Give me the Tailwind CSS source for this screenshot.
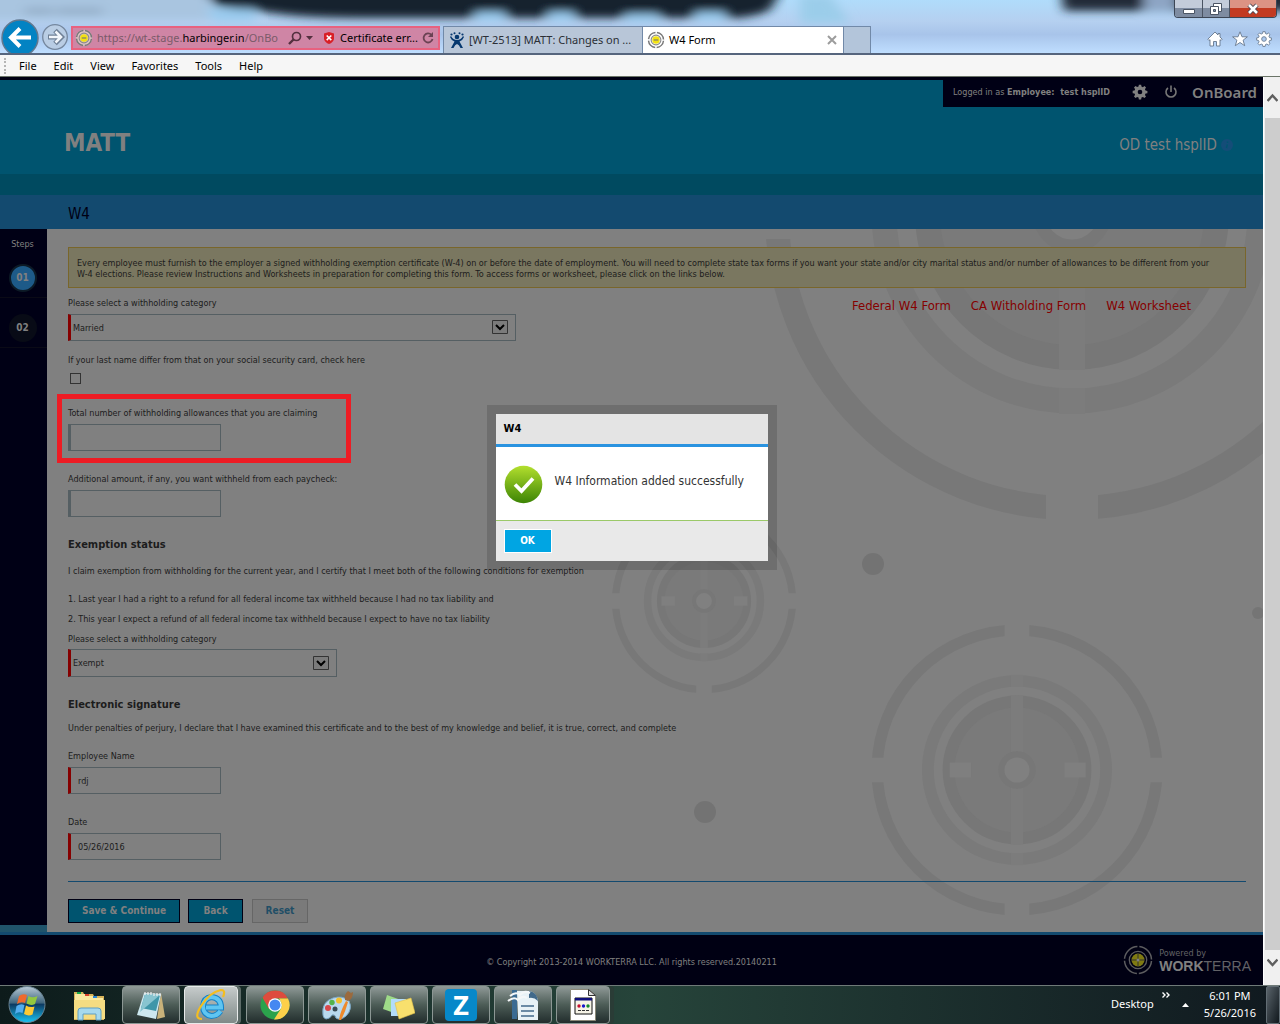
<!DOCTYPE html>
<html lang="en">
<head>
    <meta charset="UTF-8">
    <meta name="viewport" content="width=device-width, initial-scale=1.0">
    <title>W4 Form</title>
    <script src="https://cdn.jsdelivr.net/npm/@tailwindcss/browser@4"></script>
</head>
<body class="h-screen flex flex-col overflow-hidden bg-[#000013] font-['DejaVu_Sans_Condensed','DejaVu_Sans',sans-serif] text-[9px] leading-4 text-[#1c1c1c]">

    <!-- shared shapes -->
    <svg class="hidden">
        <defs>
            <g id="target">
                <circle r="295" fill="none" stroke="#787878" stroke-width="24"/>
                <circle r="188" fill="none" stroke="#7a7a7a" stroke-width="25"/>
                <circle r="157" fill="#777777"/>
                <circle r="132" fill="#7a7a7a"/>
                <path d="M-13-201h26v26h-26zM-13 175h26v26h-26zM-13-157h26v314h-26z" fill="#7c7c7c"/>
                <path d="M-26-310h52v30h-52zM-26 280h52v30h-52zM-310-26h30v52h-30zM280-26h30v52h-30z" fill="#808080"/>
                <path d="M-142-16h45v32h-45zM100-16h45v32h-45z" fill="#7f7f7f"/>
                <circle r="33" fill="#808080" stroke="#777777" stroke-width="13"/>
            </g>
            <g id="wheel">
                <circle cx="12" cy="12" r="10" fill="none" stroke="#777" stroke-width="2" stroke-dasharray="13.7 2" stroke-dashoffset="-1"/>
                <circle cx="12" cy="12" r="6.5" fill="none" stroke="#8a8a8a" stroke-width="1.5"/>
                <circle cx="12" cy="12" r="5" fill="#f2e211"/>
                <path d="M9 12h6" stroke="#777" stroke-width="1.5"/>
            </g>
            <path id="gear" d="M10.3 1h3.4l.5 2.8 2.1.9 2.4-1.6 2.3 2.3-1.6 2.4.9 2.1 2.8.5v3.4l-2.8.5-.9 2.1 1.6 2.4-2.3 2.3-2.4-1.6-2.1.9-.5 2.8h-3.4l-.5-2.8-2.1-.9-2.4 1.6L3 18.700l1.600-2.400-.9-2.100L1 13.700v-3.400l2.800-.5.9-2.100L3 5.300 5.300 3l2.400 1.600 2.100-.9zM12 8.500a3.500 3.500 0 1 0 0 7 3.500 3.500 0 0 0 0-7z" fill-rule="evenodd"/>
        </defs>
    </svg>

    <!-- browser window top -->
    <header class="relative h-[55px] shrink-0 overflow-hidden border-b-2 border-b-[#56657d] bg-[#b4d2f3] font-['Noto_Sans',sans-serif] text-xs text-black">
        <svg class="absolute inset-0 size-full" viewBox="0 0 1280 53" preserveAspectRatio="none">
            <defs>
                <filter id="soft" x="-10%" y="-80%" width="120%" height="260%"><feGaussianBlur stdDeviation="6 4"/></filter>
                <linearGradient id="glass" x1="0" y1="0" x2="0" y2="1">
                    <stop offset="0" stop-color="#b0dcfb"/><stop offset=".4" stop-color="#b5d0f0"/><stop offset=".65" stop-color="#a8c4ea"/><stop offset="1" stop-color="#bfdeff"/>
                </linearGradient>
            </defs>
            <rect width="1280" height="53" fill="url(#glass)"/>
            <g filter="url(#soft)">
                <path d="M-20-10h230v30H-20z" fill="#a9c5e0"/>
                <path d="M200-14h584l-14 24q-20 10-60 8h-340q-60 0-90-4l-64-8z" fill="#18212d"/>
                <path d="M205 9h50v12h-40zM475 12h30v9h-30zM548 12h26v9h-26zM625 14h34v8h-34zM695 12h30v9h-30z" fill="#98caee"/>
                <path d="M1060-12h240v23h-236z" fill="#202a38"/>
                <path d="M1144-12h32v24h-32z" fill="#8da5c4"/>
                <path d="M800-5h30l20 28h-50z" fill="#9bcdea"/>
                <path d="M25 8h28v6H25zM57 8h45v6H57z" fill="#8298b0" opacity=".6"/>
            </g>
        </svg>

        <div class="relative flex h-full items-end">
            <button aria-label="Back" class="h-[34px] w-10 shrink-0">
                <svg class="h-[34px] w-10" viewBox="0 0 40 34"><circle cx="20" cy="19" r="18" fill="#0383c3" stroke="#62788f" stroke-width="1.500"/><path d="M31 18.500H12M20 9.500l-9 9 9 9" fill="none" stroke="#fff" stroke-width="4"/></svg>
            </button>
            <button aria-label="Forward" class="mb-px ml-0.5 h-7 w-7 shrink-0">
                <svg class="size-7" viewBox="0 0 28 28"><circle cx="13" cy="13" r="12.300" fill="#b9cde4" stroke="#75879e" stroke-width="1.300"/><path d="M6 13h13M13 6.500l6.500 6.500-6.500 6.500" fill="none" stroke="#6f8096" stroke-width="5"/><path d="M7 13h12M13.500 7.500L19 13l-5.500 5.500" fill="none" stroke="#f2f6fb" stroke-width="2.600"/></svg>
            </button>
            <div class="mb-[3px] ml-px flex h-6 w-[369px] shrink-0 items-center border-2 border-[#e8617f] bg-[#cf85a5]">
                <svg class="ml-[2px] size-[18px] shrink-0" viewBox="0 0 24 24"><circle cx="12" cy="12" r="11" fill="#ddc3c6"/><use href="#wheel"/></svg>
                <p class="ml-1 w-[187px] whitespace-nowrap text-[11px] text-[#7a5b69]">https://wt-stage.<span class="text-black">harbinger.in</span>/OnBo</p>
                <svg class="ml-1 size-3.5 shrink-0" viewBox="0 0 14 14"><circle cx="8.500" cy="5.500" r="4" fill="none" stroke="#54303f" stroke-width="1.700"/><path d="M5.500 8.500L1 13" stroke="#54303f" stroke-width="2.400"/></svg>
                <svg class="ml-1 h-1 w-[7px] shrink-0" viewBox="0 0 7 4"><path d="M0 0h7L3.500 4z" fill="#54303f"/></svg>
                <svg class="ml-[11px] h-3 w-2.5 shrink-0" viewBox="0 0 10 12"><path d="M5 0l5 1.500V7q-1 3.500-5 5-4-1.500-5-5V1.500z" fill="#d91f26"/><path d="M2.700 3.500l4.600 4.600M7.300 3.500L2.700 8.100" stroke="#fff" stroke-width="1.600"/></svg>
                <span class="ml-1.5 w-[82px] shrink-0 whitespace-nowrap text-[11px]">Certificate err...</span>
                <svg class="size-3 shrink-0" viewBox="0 0 12 12"><path d="M9.500 3A4.500 4.500 0 1 0 10.500 7" fill="none" stroke="#6b4253" stroke-width="1.800"/><path d="M11 0v5H6z" fill="#6b4253"/></svg>
            </div>
            <div class="ml-[3px] flex h-[27px] w-[200px] shrink-0 items-center border border-b-0 border-[#7189a8] bg-[#b8c6d8] text-[#2b2f36]">
                <svg class="ml-[5px] size-4 shrink-0" viewBox="0 0 16 16" fill="#06386f"><circle cx="8" cy="5" r="2.300"/><circle cx="2.500" cy="2.500" r="1.100"/><circle cx="5.500" cy="1.200" r="1"/><circle cx="10.500" cy="1.200" r="1"/><circle cx="13.500" cy="2.500" r="1.100"/><path d="M2 4q2 4 6 4t6-4l1 1q-1 3-4.500 4.500L14 16h-2.500Q10 12.500 8 12q-2 .5-3.500 4H2l3.500-6.500Q2 8 1 5z"/></svg>
                <span class="ml-1 whitespace-nowrap text-[11px]">[WT-2513] MATT: Changes on ...</span>
            </div>
            <div class="flex h-[27px] w-[200px] shrink-0 items-center border-t border-[#7189a8] bg-white">
                <svg class="ml-1 size-[18px] shrink-0" viewBox="0 0 24 24"><use href="#wheel"/></svg>
                <span class="ml-1 flex-1 text-[11px]">W4 Form</span>
                <button aria-label="Close tab" class="mr-1.5"><svg class="size-2.5" viewBox="0 0 10 10"><path d="M1 1l8 8M9 1L1 9" stroke="#9c9c9c" stroke-width="2"/></svg></button>
            </div>
            <div class="h-[27px] w-7 shrink-0 border border-b-0 border-[#7189a8] bg-[#b3c5da]"></div>
            <nav class="mr-2 mb-1.5 ml-auto flex gap-2">
                <svg class="size-4" viewBox="0 0 16 16"><path d="M8 1L.8 8.200 2 9.500l1-.8V15h3.500v-4.500h3V15H13V8.700l1 .8 1.200-1.300-2.200-2.200V2.500h-2V4z" fill="#fff" stroke="#66788f" stroke-width=".9"/></svg>
                <svg class="ml-px size-4" viewBox="0 0 16 16"><path d="M8 .8l2 5h5.400l-4.300 3.400 1.600 5.500L8 11.500l-4.700 3.200 1.600-5.500L.6 5.800H6z" fill="#fff" stroke="#66788f" stroke-width=".9"/></svg>
                <svg class="size-4" viewBox="0 0 24 24"><use href="#gear" fill="#fff" stroke="#66788f" stroke-width="1.300"/></svg>
            </nav>
        </div>
        <div class="absolute top-0 right-[3px] flex h-[18px] overflow-hidden rounded-b border border-t-0 border-[#3c4655]">
            <button aria-label="Minimize" class="flex w-7 items-center justify-center border-r border-[#4a5463] bg-linear-to-b from-[#c3ccda] from-50% to-[#7e8ca1] to-50%"><svg class="h-4 w-3" viewBox="0 0 12 16"><path d="M.5 8.500h11v4H.5z" fill="#fff" stroke="#4b5564"/></svg></button>
            <button aria-label="Restore" class="flex w-[27px] items-center justify-center border-r border-[#4a5463] bg-linear-to-b from-[#c3ccda] from-50% to-[#7e8ca1] to-50%"><svg class="size-3" viewBox="0 0 12 12"><path d="M3.500.5h8v8h-8z" fill="#fff" stroke="#4b5564"/><path d="M.5 3.500h8v8h-8z" fill="#fff" stroke="#4b5564"/><path d="M3.500 6.500h2v2h-2z" fill="#8090a5" stroke="#4b5564"/></svg></button>
            <button aria-label="Close" class="flex w-[46px] items-center justify-center bg-linear-to-b from-[#dc9384] from-45% to-[#c23a21] to-50%"><svg class="h-3 w-3" viewBox="0 0 12 12"><path d="M2 2l8 8M10 2l-8 8" stroke="#4b4450" stroke-width="4.500"/><path d="M2 2l8 8M10 2l-8 8" stroke="#fff" stroke-width="2.600"/></svg></button>
        </div>
    </header>

    <nav class="flex h-[22px] shrink-0 items-center gap-[17px] border-b border-[#6b7568] bg-[#f6f6f6] pl-1 font-['Noto_Sans',sans-serif] text-[11px] text-black">
        <span class="h-4 border-l-2 border-dotted border-[#b5b5b5]"></span>
        <span class="-ml-1">File</span><span>Edit</span><span>View</span><span>Favorites</span><span>Tools</span><span>Help</span>
    </nav>

    <div class="flex min-h-0 flex-1">
        <div class="relative flex min-w-0 flex-1 flex-col">
            <header class="border-t-[3px] border-[#000013] bg-[#00546f]">
                <div class="ml-auto flex h-[27px] w-80 items-center bg-[#000015] pb-1 pl-2.5 text-[#808080]">
                    <span class="flex-1 whitespace-nowrap">Logged in as <b>Employee:&nbsp; test hsplID</b></span>
                    <svg class="size-4" viewBox="0 0 24 24" fill="#808080"><use href="#gear"/></svg>
                    <svg class="ml-4 size-3.5" viewBox="0 0 14 14"><path d="M4 3a5 5 0 1 0 6 0M7 .5V7" fill="none" stroke="#777" stroke-width="1.600"/></svg>
                    <span class="mr-1.5 ml-3.5 font-['Noto_Sans',sans-serif] text-[15px] font-semibold">OnBoard</span>
                </div>
                <div class="flex h-[67px] items-center justify-between pt-1 pr-[30px] pl-16 text-[#808080]">
                    <h1 class="text-2xl font-bold">MATT</h1>
                    <p class="flex items-center gap-1 pt-1 text-[15px]">OD test hsplID
                        <svg class="size-3" viewBox="0 0 12 12"><circle cx="6" cy="6" r="6" fill="#144d78"/><path d="M6.500 2.500v1.500M6.300 5.300L5.500 9" stroke="#00546f" stroke-width="1.500"/></svg>
                    </p>
                </div>
                <div class="h-[21px] bg-[#004a60]"></div>
                <h2 class="flex h-[34px] items-center bg-[#134a6f] pt-1 pl-[68px] text-[15px] text-[#000013]">W4</h2>
            </header>

            <div class="flex flex-1">
                <aside class="flex w-[47px] shrink-0 flex-col border-b-[7px] border-[#20546b] bg-[#000015] text-center text-[#808080]">
                    <p class="mt-[7px] pr-0.5">Steps</p>
                    <div class="flex h-[46px] justify-center border-b border-[#0a0a16] pt-3">
                        <a href="#step1" class="mr-0.5 flex size-7 items-center justify-center rounded-full border-2 border-[#0c1a26] bg-[#1d5a88] text-[10px] font-bold">01</a>
                    </div>
                    <div class="flex h-[50px] justify-center border-b border-[#0a0a16] pt-4">
                        <a href="#step2" class="mr-0.5 flex size-7 items-center justify-center rounded-full bg-[#080b16] text-[10px] font-bold">02</a>
                    </div>
                </aside>

                <main class="relative flex-1 overflow-hidden bg-[#808080] pt-[18px] pr-[17px] pb-[9px] pl-[21px]">
                    <svg class="absolute top-0 right-0 h-[703px] w-[1216px]" viewBox="47 229 1216 703">
                        <use href="#target" transform="translate(1072 213)"/>
                        <use href="#target" transform="translate(1017 770) scale(.474)"/>
                        <use href="#target" transform="translate(704 601) scale(.3)"/>
                        <circle cx="873" cy="564" r="11" fill="#737373"/>
                        <circle cx="705" cy="812" r="11" fill="#737373"/>
                        <circle cx="1258" cy="613" r="6" fill="#757575"/>
                    </svg>

                    <form class="relative">
                        <p class="h-[41px] border border-[#79662b] bg-[#7a7760] px-2 pt-2.5 leading-[11px]">Every employee must furnish to the employer a signed withholding exemption certificate (W-4) on or before the date of employment. You will need to complete state tax forms if you want your state and/or city marital status and/or number of allowances to be different from your <span class="whitespace-nowrap">W-4 elections.</span> Please review Instructions and Worksheets in preparation for completing this form. To access forms or worksheet, please click on the links below.</p>

                        <div class="flex justify-between">
                            <div class="mt-[7px] w-[448px]">
                                <label for="category" class="block">Please select a withholding category</label>
                                <div class="relative mt-[3px]">
                                    <select id="category" class="h-[27px] w-full appearance-none border border-l-[3px] border-[#555f63] border-l-[#860000] pl-0.5"><option>Married</option><option>Single</option></select>
                                    <svg class="pointer-events-none absolute top-1.5 right-2 h-3.5 w-4" viewBox="0 0 16 14"><path d="M.5.5h15v13H.5z" fill="#7b7b7b" stroke="#333"/><path d="M4 5l4 4 4-4" fill="none" stroke="#000" stroke-width="2"/></svg>
                                </div>
                            </div>
                            <div class="mt-2.5 mr-[55px] flex gap-5 text-[13px] text-[#860000]">
                                <a href="#federal">Federal W4 Form</a>
                                <a href="#ca">CA Witholding Form</a>
                                <a href="#worksheet">W4 Worksheet</a>
                            </div>
                        </div>

                        <label for="differ" class="mt-[11px] block">If your last name differ from that on your social security card, check here</label>
                        <input id="differ" type="checkbox" class="mt-[5px] ml-0.5 block size-[11px] appearance-none border border-[#333]">

                        <div class="relative mt-[21px]">
                            <label for="allowances" class="block">Total number of withholding allowances that you are claiming</label>
                            <input id="allowances" type="text" class="mt-[3px] block h-[27px] w-[153px] border border-l-[3px] border-[#555f63] px-[7px]">
                            <!-- highlight -->
                            <div class="pointer-events-none absolute -top-[11px] -bottom-3 -left-[11px] w-[294px] border-[5px] border-[#ed1c24]"></div>
                        </div>

                        <label for="extra" class="mt-5 block">Additional amount, if any, you want withheld from each paycheck:</label>
                        <input id="extra" type="text" class="mt-[3px] block h-[27px] w-[153px] border border-l-[3px] border-[#555f63] px-[7px]">

                        <h3 class="mt-5 text-[11px] font-bold">Exemption status</h3>
                        <p class="mt-2.5">I claim exemption from withholding for the current year, and I certify that I meet both of the following conditions for exemption</p>
                        <p class="mt-3">1. Last year I had a right to a refund for all federal income tax withheld because I had no tax liability and</p>
                        <p class="mt-1">2. This year I expect a refund of all federal income tax withheld because I expect to have no tax liability</p>
                        <label for="exempt" class="mt-1 block">Please select a withholding category</label>
                        <div class="relative mt-0.5 w-[269px]">
                            <select id="exempt" class="h-7 w-full appearance-none border border-l-[3px] border-[#555f63] border-l-[#860000] pl-0.5"><option>Exempt</option></select>
                            <svg class="pointer-events-none absolute top-[7px] right-2 h-3.5 w-4" viewBox="0 0 16 14"><path d="M.5.5h15v13H.5z" fill="#7b7b7b" stroke="#333"/><path d="M4 5l4 4 4-4" fill="none" stroke="#000" stroke-width="2"/></svg>
                        </div>

                        <h3 class="mt-5 text-[11px] font-bold">Electronic signature</h3>
                        <p class="mt-[7px]">Under penalties of perjury, I declare that I have examined this certificate and to the best of my knowledge and belief, it is true, correct, and complete</p>
                        <label for="name" class="mt-3 block">Employee Name</label>
                        <input id="name" type="text" value="rdj" class="mt-[3px] block h-[27px] w-[153px] border border-l-[3px] border-[#555f63] border-l-[#860000] px-[7px]">
                        <label for="date" class="mt-5 block">Date</label>
                        <input id="date" type="text" value="05/26/2016" class="mt-[3px] block h-[27px] w-[153px] border border-l-[3px] border-[#555f63] border-l-[#860000] px-[7px]">

                        <div class="mt-[21px] flex border-t border-[#134a6f] pt-[17px] text-[10px] font-bold">
                            <button type="button" class="h-6 w-28 border border-[#000013] bg-[#00546f] text-[#808080]">Save &amp; Continue</button>
                            <button type="button" class="ml-2 h-6 w-[55px] border border-[#000013] bg-[#00546f] text-[#808080]">Back</button>
                            <button type="button" class="ml-[9px] h-6 w-14 border border-[#666] bg-[#7a7a7a] text-[#1f4e66]">Reset</button>
                        </div>
                    </form>
                </main>
            </div>

            <footer class="relative flex h-[53px] shrink-0 items-center justify-center border-t-[3px] border-[#134a6f] bg-[#000013] pt-1 text-[#808080]">
                <p>© Copyright 2013-2014 WORKTERRA LLC. All rights reserved.20140211</p>
                <div class="absolute right-3 flex items-center gap-1.5 pb-1 font-['Liberation_Sans',sans-serif]">
                    <svg class="size-[30px]" viewBox="0 0 30 30"><circle cx="15" cy="15" r="13.500" fill="none" stroke="#5c5c5f" stroke-width="1.500" stroke-dasharray="19.200 2" stroke-dashoffset="-1"/><circle cx="15" cy="15" r="8.700" fill="none" stroke="#5c5c5f" stroke-width="1.300"/><circle cx="15" cy="15" r="6.500" fill="#7f7a12"/><path d="M15 8v14M8 15h14" stroke="#33332a"/><circle cx="15" cy="15" r="1.500" fill="#808080"/></svg>
                    <p class="text-sm leading-[13px]"><span class="block font-['DejaVu_Sans_Condensed',sans-serif] text-[9px] leading-[13px] text-[#626266]">Powered by</span><b>WORK</b><span class="text-[#626266]">TERRA</span></p>
                </div>
            </footer>

            <div role="dialog" aria-labelledby="dialogTitle" class="absolute top-[328px] left-1/2 w-[290px] -translate-x-1/2 bg-black/14 p-[9px] text-[#333]">
                <h2 id="dialogTitle" class="h-[33px] border-b-[3px] border-[#2a93e0] bg-[#e4e4e4] pl-2 text-[11px] leading-[30px] font-bold text-black">W4</h2>
                <div class="flex h-[74px] items-start gap-3 border-b border-[#9bc969] bg-white pt-[18px] pl-2">
                    <svg class="size-[39px]" viewBox="0 0 39 39"><defs><linearGradient id="ok" x1="0" y1="0" x2="0" y2="1"><stop offset="0" stop-color="#b3df2e"/><stop offset="1" stop-color="#3c8404"/></linearGradient></defs><circle cx="19.500" cy="19.500" r="18.800" fill="url(#ok)"/><path d="M11 19.500l6.500 6.500L29 13.500" fill="none" stroke="#fff" stroke-width="3.800"/></svg>
                    <p class="pt-2 text-xs leading-4">W4 Information added successfully</p>
                </div>
                <div class="h-10 bg-[#e9e9e9] pt-2 pl-2">
                    <button class="h-6 w-12 border border-white bg-[#00a5e3] text-[10px] font-bold text-white">OK</button>
                </div>
            </div>
        </div>

        <!-- scrollbar -->
        <div class="flex w-[17px] shrink-0 flex-col items-center border-l border-white bg-[#f0f0f0]">
            <svg class="my-4 h-[9px] w-[11px] shrink-0" viewBox="0 0 11 9"><path d="M.5 8l5-5.500L10.500 8" fill="none" stroke="#5f5f5f" stroke-width="2.500"/></svg>
            <div class="w-[15px] flex-1 bg-[#cdcdcd]"></div>
            <svg class="mt-2 mb-[18px] h-[9px] w-[11px] shrink-0" viewBox="0 0 11 9"><path d="M.5 1.500l5 5.500 5-5.500" fill="none" stroke="#5f5f5f" stroke-width="2.500"/></svg>
        </div>
    </div>

    <!-- taskbar -->
    <footer class="flex h-[39px] shrink-0 items-stretch border-t border-[#6f7a78] bg-linear-to-r from-[#0d1b1b] via-[#26443a] to-[#10191f] font-['Noto_Sans',sans-serif] text-[11px] text-white">
        <svg class="ml-2 h-[38px] w-[38px]" viewBox="0 0 38 38"><defs><linearGradient id="orb" x1="0" y1="0" x2="0" y2="1"><stop offset="0" stop-color="#b9cad6"/><stop offset=".45" stop-color="#41677f"/><stop offset=".5" stop-color="#0d3b63"/><stop offset="1" stop-color="#18c5f5"/></linearGradient></defs><circle cx="19" cy="18.500" r="18" fill="url(#orb)" stroke="#67808f"/><path d="M11 10q4-3 8-1l-2 8q-4-2-8 1z" fill="#ef6a2d"/><path d="M20.500 10q4 2.500 9 0l-2.500 8q-4 2-8.500-.5z" fill="#93c83e"/><path d="M8.500 20q4-3 8-1l-2 8q-4-2-7.500 1z" fill="#53aef0"/><path d="M18 19.500q4 2.500 8.500 1l-2 8q-4 2-8.500-.500z" fill="#fcc934"/></svg>
        <svg class="mr-4 ml-[26px] h-[38px] w-[34px]" viewBox="0 0 34 38"><path d="M2 6h9l1 2h9l1 2h10v24H2z" fill="#d8b45a"/><path d="M3 8h10v24H3zM12 10h9v20h-9zM20 12h11v19H20z" fill="#fbeaa0"/><path d="M2 14h31v19H2z" fill="#f5dc82"/><path d="M5 6h4v2H5z" fill="#19a94a"/><path d="M13 8h4v2h-4z" fill="#d8402b"/><path d="M21 10h4v2h-4z" fill="#2787d8"/><path d="M6 34V25q0-3 3-3h17q3 0 3 3v9h-5v-6H11v6z" fill="#a6d9ee" stroke="#5e9fc4"/></svg>
        <div class="flex gap-1 text-center">
            <button aria-label="Notepad" class="flex w-[58px] items-center justify-center rounded-sm border border-[#8c9794] bg-linear-to-b from-[#8e9896] via-[#4c5c56] to-[#222d2d]">
                <svg class="size-8" viewBox="0 0 32 32"><path d="M26 4l4 24-8 2z" fill="#c9b27a"/><path d="M9 4l17 1-5 25-19-4z" fill="#cde7ef"/><path d="M10 5l15 1-4 16-15-3z" fill="#3f96a9"/><path d="M10 5l15 1-20 17z" fill="#88c4d0"/><path d="M10 3v3M13 3v3M16 3v3M19 4v3M22 4v3M25 4v3" stroke="#eee" stroke-width="1.200"/></svg>
            </button>
            <button aria-label="Internet Explorer" class="mr-1 flex w-[54px] items-center justify-center rounded-sm border border-[#e7eaea] bg-linear-to-b from-[#c6cbcb] to-[#7f8a88] shadow-[3px_0_0_#5d6b68]">
                <svg class="size-8" viewBox="0 0 32 32"><path d="M25.500 22Q22 27 16.500 27 8.500 26 8 17.500 8.500 9 16.500 8q9.500 1 9.500 10.500H11" fill="none" stroke="#1482c8" stroke-width="6"/><path d="M25.500 22Q22 27 16.500 27 8.500 26 8 17.500 8.500 9 16.500 8q9.500 1 9.500 10.500H11" fill="none" stroke="#5fc5f2" stroke-width="4"/><path d="M7 30Q-2 30 6 17 15 3 26 1q5 0 2 7" fill="none" stroke="#f3bd20" stroke-width="2.200"/></svg>
            </button>
            <button aria-label="Chrome" class="flex w-[58px] items-center justify-center rounded-sm border border-[#8c9794] bg-linear-to-b from-[#8e9896] via-[#4c5c56] to-[#222d2d]">
                <svg class="size-[30px]" viewBox="0 0 30 30"><circle cx="15" cy="15" r="14.500" fill="#2ba24c"/><path d="M2.500 7.800A14.500 14.500 0 0 1 28 8.500H15L9 19z" fill="#dd4b3e"/><path d="M28 8.500A14.500 14.500 0 0 1 14 29.500l7-11q2-5-2-10z" fill="#fdd04a"/><circle cx="15" cy="15" r="6.800" fill="#fff"/><circle cx="15" cy="15" r="5.500" fill="#4688f1"/></svg>
            </button>
            <button aria-label="Paint" class="flex w-[58px] items-center justify-center rounded-sm border border-[#8c9794] bg-linear-to-b from-[#8e9896] via-[#4c5c56] to-[#222d2d]">
                <svg class="size-8" viewBox="0 0 32 32"><path d="M2 26Q0 13 12 9q10-3 16 3 4 8-3 15-6 5-10 2-1-4-4-3-2 4-6 4-3-1-3-4z" fill="#b9d9ee" stroke="#7ba7c6"/><circle cx="7" cy="19" r="3" fill="#d8484b"/><circle cx="11" cy="13.500" r="2.700" fill="#54b34c"/><circle cx="18" cy="11.500" r="3" fill="#f3c12d"/><circle cx="14" cy="20" r="2.500" fill="#394b55"/><path d="M18 31q1-8 7-19l2 1q-3 11-7 18z" fill="#ee8a2c"/><path d="M24 11q-1-6 3-9l3 2 2-1q0 7-5 9z" fill="#9b6a3d"/></svg>
            </button>
            <button aria-label="Sticky Notes" class="flex w-[58px] items-center justify-center rounded-sm border border-[#8c9794] bg-linear-to-b from-[#8e9896] via-[#4c5c56] to-[#222d2d]">
                <svg class="size-8" viewBox="0 0 32 32"><path d="M4 6l14 5-4 14L0 20z" fill="#9edb88"/><path d="M8 10h15v17H8z" fill="#b3dcf8"/><path d="M12 14l16-5 4 15-16 6z" fill="#f8e06d" stroke="#e0bf48" stroke-width=".6"/></svg>
            </button>
            <button aria-label="Zoom" class="flex w-[58px] items-center justify-center rounded-sm border border-[#8c9794] bg-linear-to-b from-[#8e9896] via-[#4c5c56] to-[#222d2d]">
                <span class="flex size-8 items-center justify-center rounded bg-[#0788c9] text-[27px] font-bold">Z</span>
            </button>
            <button aria-label="Writer" class="flex w-[58px] items-center justify-center rounded-sm border border-[#8c9794] bg-linear-to-b from-[#8e9896] via-[#4c5c56] to-[#222d2d]">
                <svg class="size-8" viewBox="0 0 32 32"><path d="M5 1h5v29H5z" fill="#3b6b92"/><path d="M10 2h12q8 1 9 11v18H11z" fill="#e8f2f6"/><path d="M22 2q8 1 9 10-4-4-9-3z" fill="#41698a"/><path d="M14 17h13M14 22h13M14 27h13" stroke="#41698a" stroke-width="1.500"/><path d="M3 7q6-5 10-1 4-5 10-2M1 12q6-5 10-1 4-5 9-2" fill="none" stroke="#f4f7f8" stroke-width="2"/></svg>
            </button>
            <button aria-label="Script" class="flex w-[54px] items-center justify-center rounded-sm border border-[#8c9794] bg-linear-to-b from-[#8e9896] via-[#4c5c56] to-[#222d2d] shadow-[4px_0_0_#2a3c36]">
                <svg class="h-8 w-[26px]" viewBox="0 0 26 32"><path d="M.5.500h18l7 6v25H.500z" fill="#fff" stroke="#8a8878"/><path d="M18.500.500v6h7z" fill="#ddd" stroke="#333"/><path d="M5 9h17v16H5z" fill="#f6f3e6" stroke="#111"/><path d="M5 9h17v2.500H5z" fill="#10107a"/><circle cx="9" cy="17" r="1.700" fill="#c8102e"/><circle cx="13.500" cy="17" r="1.700" fill="#1717c9"/><circle cx="18" cy="17" r="1.700" fill="#128a2e"/><path d="M8 21.500h11" stroke="#333" stroke-dasharray="3 1"/></svg>
            </button>
        </div>
        <div class="ml-auto flex items-center text-[11px] leading-[17px]">
            <span class="pb-1">Desktop</span>
            <svg class="mb-5 ml-2 h-1.5 w-2" viewBox="0 0 8 6"><path d="M.5.500L3 3 .5 5.500M4.500.500L7 3 4.500 5.500" fill="none" stroke="#fff" stroke-width="1.400"/></svg>
            <svg class="ml-3 h-1 w-[7px]" viewBox="0 0 7 4"><path d="M3.500 0L7 4H0z" fill="#fff"/></svg>
            <time class="ml-[15px] pb-0.5 text-center">6:01 PM<br>5/26/2016</time>
            <span class="ml-[10px] h-full w-[14px] rounded-xs border border-[#626d74] bg-linear-to-br from-[#5a646b] to-[#12191e]"></span>
        </div>
    </footer>
</body>
</html>
